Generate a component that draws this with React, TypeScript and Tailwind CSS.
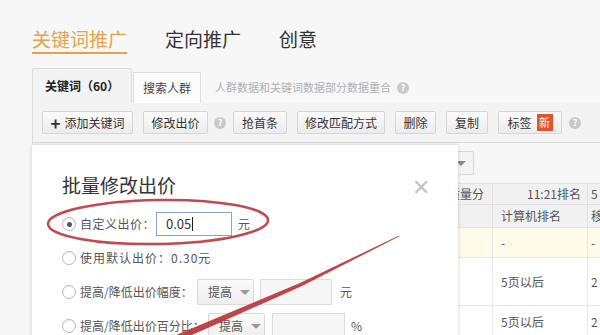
import React from "react";

const FONT = '"Noto Sans CJK SC", "Liberation Sans", sans-serif';

function Help({ className = "" }: { className?: string }) {
  return (
    <span
      className={`inline-flex h-[12px] w-[12px] items-center justify-center rounded-full bg-[#c9c9c9] text-[9px] font-bold leading-none text-white ${className}`}
    >
      ?
    </span>
  );
}

function ToolButton({ width, children }: { width: string; children: React.ReactNode }) {
  return (
    <button
      className={`flex h-[23px] ${width} shrink-0 items-center justify-center rounded-[2px] border border-[#d6d6d6] bg-gradient-to-b from-[#fbfbfb] to-[#ececec] text-[12px] text-[#333]`}
    >
      {children}
    </button>
  );
}

function Radio({ checked = false }: { checked?: boolean }) {
  return (
    <span className="flex h-[14px] w-[14px] shrink-0 items-center justify-center rounded-full border border-[#b9b9b9] bg-white shadow-[inset_0_1px_1px_rgba(0,0,0,0.08)]">
      {checked && <span className="h-[5px] w-[5px] rounded-full bg-[#555]" />}
    </span>
  );
}

function SelectBox({ width }: { width: string }) {
  return (
    <span
      className={`flex h-[26px] ${width} shrink-0 items-center gap-[8px] rounded-[2px] border border-[#d9d9d9] bg-gradient-to-b from-[#fafafa] to-[#eeeeee] pl-[10px] text-[12px] tracking-normal text-[#555]`}
    >
      提高
      <span className="h-0 w-0 border-x-[5px] border-t-[5px] border-x-transparent border-t-[#999]" />
    </span>
  );
}

export default function App() {
  return (
    <div
      className="relative h-[335px] w-[600px] overflow-hidden bg-[#f7f7f7]"
      style={{ fontFamily: FONT }}
    >
      {/* top navigation */}
      <nav className="flex gap-[38px] pl-[32px] pt-[26px] text-[19px] leading-[25px] text-[#333]">
        <span className="border-b-2 border-[#e3a34a] pb-[1px] text-[#e3a34a]">关键词推广</span>
        <span>定向推广</span>
        <span>创意</span>
      </nav>

      {/* sub tabs */}
      <div className="mt-[14px] flex h-[35px] items-end pl-[32px]">
        <div className="flex h-[35px] w-[100px] items-center rounded-t-[3px] border border-b-0 border-[#dcdcdc] bg-[#f3f3f3] pl-[12px] text-[12px] font-bold text-[#222]">
          关键词（60）
        </div>
        <div className="ml-[1px] flex h-[31px] w-[68px] items-center justify-center border border-b-0 border-[#dcdcdc] bg-[#fcfcfc] text-[12px] text-[#444]">
          搜索人群
        </div>
        <div className="ml-[14px] flex h-[31px] items-center gap-[6px] text-[11px] text-[#b0b0b0]">
          人群数据和关键词数据部分数据重合
          <Help />
        </div>
      </div>

      {/* toolbar */}
      <div className="ml-[32px] flex h-[40px] items-center gap-[10px] border-b border-l border-[#dcdcdc] bg-[#f3f3f3] pl-[9px]">
        <ToolButton width="w-[91px]">
          <span className="mr-[4px] text-[17px] font-bold leading-none">+</span>添加关键词
        </ToolButton>
        <ToolButton width="w-[65px]">修改出价</ToolButton>
        <Help className="-ml-[4px] -mr-[3px]" />
        <ToolButton width="w-[54px]">抢首条</ToolButton>
        <ToolButton width="w-[88px]">修改匹配方式</ToolButton>
        <ToolButton width="w-[41px]">删除</ToolButton>
        <ToolButton width="w-[42px]">复制</ToolButton>
        <ToolButton width="w-[64px]">
          标签
          <span className="ml-[5px] flex h-[17px] w-[16px] items-center justify-center bg-[#dd5630] text-[11px] text-white">
            新
          </span>
        </ToolButton>
        <Help className="-ml-[3px]" />
      </div>

      {/* content behind the dialog */}
      <div className="ml-[32px] border-l border-[#dcdcdc]">
        <div className="flex h-[40px] items-center pl-[348px]">
          <span className="flex h-[24px] w-[93px] items-center justify-end rounded-[2px] border border-[#d9d9d9] bg-[#f4f4f4] pr-[7px]">
            <span className="h-0 w-0 border-x-[5px] border-t-[5px] border-x-transparent border-t-[#888]" />
          </span>
        </div>
        <div className="grid grid-cols-[459px_95px_1fr] text-[12px] text-[#555]">
          <div className="flex h-[22px] items-center justify-end border-y border-[#e2e2e2] bg-[#f1f1f1] pr-[8px]">
            质量分
          </div>
          <div className="flex h-[22px] items-center justify-end border-y border-l border-[#e2e2e2] bg-[#f1f1f1] pr-[6px]">
            11:21排名
          </div>
          <div className="flex h-[22px] items-center overflow-hidden border-y border-l border-[#e2e2e2] bg-[#f1f1f1] pl-[3px]">
            5
          </div>

          <div className="h-[23px] border-b border-[#e2e2e2] bg-[#f1f1f1]" />
          <div className="flex h-[23px] items-center border-b border-l border-[#e2e2e2] bg-[#f1f1f1] pl-[8px]">
            计算机排名
          </div>
          <div className="flex h-[23px] items-center overflow-hidden border-b border-l border-[#e2e2e2] bg-[#f1f1f1] pl-[3px]">
            移
          </div>

          <div className="h-[30px] border-b border-[#e8e8e8] bg-[#fffbe8]" />
          <div className="flex h-[30px] items-center border-b border-l border-[#e8e8e8] bg-[#fffbe8] pl-[8px]">
            -
          </div>
          <div className="flex h-[30px] items-center border-b border-l border-[#e8e8e8] bg-[#fffbe8] pl-[3px]">
            -
          </div>

          <div className="h-[48px] border-b border-[#e8e8e8] bg-white" />
          <div className="flex h-[48px] items-center border-b border-l border-[#e8e8e8] bg-white pl-[8px]">
            5页以后
          </div>
          <div className="flex h-[48px] items-center border-b border-l border-[#e8e8e8] bg-white pl-[3px]">
            2
          </div>

          <div className="h-[40px] bg-white" />
          <div className="flex h-[32px] items-center border-l border-[#e8e8e8] bg-white pl-[8px]">
            5页以后
          </div>
          <div className="flex h-[32px] items-center border-l border-[#e8e8e8] bg-white pl-[3px]">
            2
          </div>
        </div>
      </div>

      {/* dialog */}
      <div className="absolute left-[32px] top-[145px] h-[200px] w-[426px] bg-white shadow-[0_0_4px_rgba(0,0,0,0.18)]">
        <div className="flex items-start justify-between pl-[30px] pr-[28px] pt-[28px]">
          <h2 className="text-[19px] leading-[24px] text-[#333]">批量修改出价</h2>
          <span className="mt-[1px] text-[22px] font-light leading-none text-[#c4c4c4]">✕</span>
        </div>
        <div className="mt-[12px] flex flex-col whitespace-nowrap pl-[30px] text-[12px] text-[#555]">
          <label className="flex h-[30px] items-center">
            <Radio checked />
            <span className="ml-[4px] w-[76px] shrink-0 tracking-[0.5px]">自定义出价：</span>
            <span className="flex h-[24px] w-[76px] items-center border border-[#86a3c8] pl-[9px] text-[13px] text-[#333]">
              0.05<span className="ml-[1px] h-[14px] w-px bg-[#222]" />
            </span>
            <span className="ml-[6px]">元</span>
          </label>
          <label className="mt-[4px] flex h-[30px] items-center">
            <Radio />
            <span className="ml-[4px] tracking-[1px]">使用默认出价：0.30元</span>
          </label>
          <label className="mt-[4px] flex h-[30px] items-center">
            <Radio />
            <span className="ml-[4px] w-[117px] shrink-0">提高/降低出价幅度：</span>
            <SelectBox width="w-[57px]" />
            <span className="ml-[6px] h-[26px] w-[72px] shrink-0 border border-[#dcdcdc] bg-[#f6f6f6]" />
            <span className="ml-[8px]">元</span>
          </label>
          <label className="mt-[4px] flex h-[30px] items-center">
            <Radio />
            <span className="ml-[4px] w-[128px] shrink-0">提高/降低出价百分比：</span>
            <SelectBox width="w-[57px]" />
            <span className="ml-[7px] h-[26px] w-[73px] shrink-0 border border-[#dcdcdc] bg-[#f6f6f6]" />
            <span className="ml-[6px]">%</span>
          </label>
        </div>
      </div>

      {/* red annotation marks */}
      <svg className="pointer-events-none absolute left-0 top-0" width="600" height="335" viewBox="0 0 600 335">
        <ellipse
          cx="158"
          cy="222"
          rx="110"
          ry="22"
          transform="rotate(-1 158 222)"
          fill="none"
          stroke="#b8363c"
          strokeWidth="2.5"
          opacity="0.9"
        />
        <polygon points="400,236 398,236 300,283 176,335 192,335 302,286" fill="#b8353a" opacity="0.92" />
      </svg>
    </div>
  );
}
